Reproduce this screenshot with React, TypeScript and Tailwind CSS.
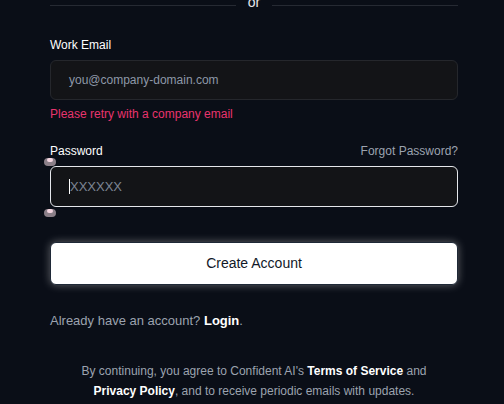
import React from 'react';

const Handle: React.FC<{ className: string }> = ({ className }) => (
  <span className={`absolute left-[-6px] w-[12px] h-[8px] rounded-full bg-[#8b7f88] overflow-hidden ${className}`}>
    <span className="absolute left-[3px] top-0 w-[6px] h-[4px] rounded-full bg-[#f3d5e0]"></span>
  </span>
);

const App: React.FC = () => {
  return (
    <div className="w-[504px] h-[404px] overflow-hidden bg-[#0a0e17] font-['Liberation_Sans',Arial,sans-serif]">
      <div className="w-[408px] ml-[50px]">
        {/* Divider */}
        <div className="flex items-center gap-3 mt-[-6px] h-[22px]">
          <div className="flex-1 h-px bg-[#262a33]"></div>
          <span className="text-[14px] leading-[16px] text-[#e5e7eb] mt-[-6px]">or</span>
          <div className="flex-1 h-px bg-[#262a33]"></div>
        </div>

        {/* Work email */}
        <div className="mt-[21px]">
          <label className="block text-[12px] leading-[16px] text-white">Work Email</label>
          <div className="mt-[7px] h-[40px] rounded-[6px] border border-[#25272c] bg-[#131417] flex items-center px-[18px]">
            <span className="text-[12px] text-[#8e98a8]">you@company-domain.com</span>
          </div>
          <p className="mt-[6px] text-[12px] leading-[16px] text-[#e8346e]">Please retry with a company email</p>
        </div>

        {/* Password */}
        <div className="mt-[21px]">
          <div className="flex items-center justify-between">
            <label className="text-[12px] leading-[16px] text-white">Password</label>
            <span className="text-[12px] leading-[16px] text-[#9ca3af]">Forgot Password?</span>
          </div>
          <div className="relative mt-[7px]">
            <Handle className="top-[-8px]" />
            <div className="h-[41px] rounded-[6px] border border-[#e5e7eb] bg-[#131417] flex items-center px-[18px]">
              <span className="w-px h-[15px] bg-white"></span>
              <span className="text-[13px] text-[#7d8593]">XXXXXX</span>
            </div>
            <Handle className="bottom-[-10px]" />
          </div>
        </div>

        {/* Button */}
        <button className="mt-[35px] w-full h-[43px] rounded-[6px] bg-white border border-[#1f2937] shadow-[0_0_8px_rgba(255,255,255,0.35)] text-[14px] text-[#111827]">
          Create Account
        </button>

        <p className="mt-[28px] text-[13px] leading-[16px] text-[#9ca3af]">
          Already have an account? <span className="text-white font-bold">Login</span>.
        </p>

        <p className="mt-[32px] text-center text-[12px] leading-[20px] text-[#9ca3af] px-[20px]">
          By continuing, you agree to Confident AI's <span className="text-white font-bold">Terms of Service</span> and{' '}
          <span className="text-white font-bold">Privacy Policy</span>, and to receive periodic emails with updates.
        </p>
      </div>
    </div>
  );
};

export default App;
